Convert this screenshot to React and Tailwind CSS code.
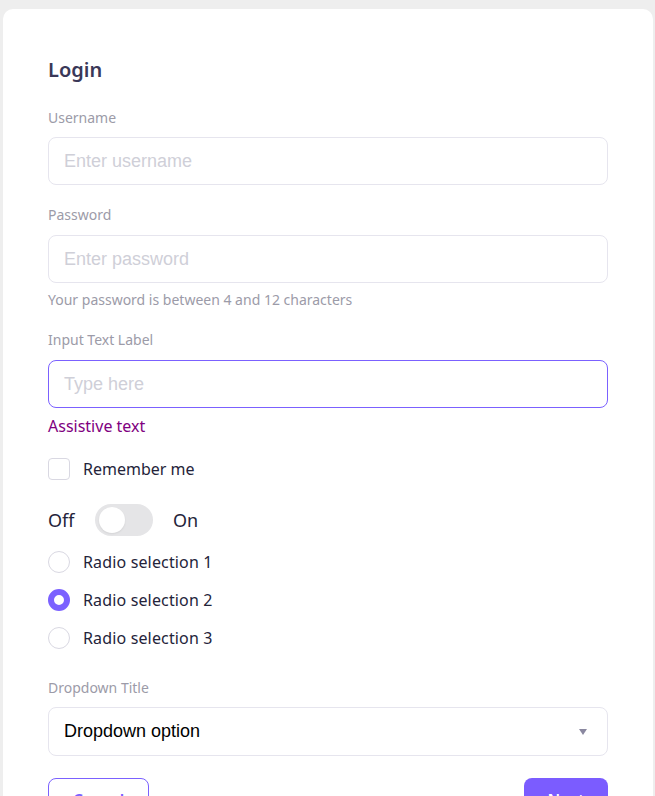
import React from "react";

export default function App() {
  const font = { fontFamily: '"Noto Sans", sans-serif' };
  return (
    <div className="min-h-[796px] bg-[#eeeeee] pt-[9px] pl-[3px] pr-[2px] overflow-hidden h-[796px]" style={font}>
      <div className="bg-white rounded-[10px] pt-[47px] px-[45px] pb-10 font-['Noto_Sans',sans-serif]">
        <h1 className="text-[20px] leading-[28px] font-semibold text-[#3a3858]">Login</h1>

        <label className="block mt-[24px] text-[14px] leading-[20px] text-[#9c9ba8]">Username</label>
        <div className="mt-[9px] h-[48px] border border-[#e6e5ee] rounded-[8px] flex items-center px-[15px]">
          <span className="font-['Liberation_Sans',Arial,sans-serif] text-[18px] text-[#cfcfd8]">Enter username</span>
        </div>

        <label className="block mt-[20px] text-[14px] leading-[20px] text-[#9c9ba8]">Password</label>
        <div className="mt-[10px] h-[48px] border border-[#e6e5ee] rounded-[8px] flex items-center px-[15px]">
          <span className="font-['Liberation_Sans',Arial,sans-serif] text-[18px] text-[#cfcfd8]">Enter password</span>
        </div>
        <p className="mt-[7px] text-[14px] leading-[20px] text-[#9c9ba8]">Your password is between 4 and 12 characters</p>

        <label className="block mt-[20px] text-[14px] leading-[20px] text-[#9c9ba8]">Input Text Label</label>
        <div className="mt-[10px] h-[48px] border border-[#7b61ff] rounded-[8px] flex items-center px-[15px]">
          <span className="font-['Liberation_Sans',Arial,sans-serif] text-[18px] text-[#cfcfd8]">Type here</span>
        </div>
        <p className="mt-[6px] text-[16px] leading-[24px] text-[#800080]">Assistive text</p>

        <div className="mt-[19px] flex items-center gap-[13px] h-[24px]">
          <span className="w-[22px] h-[22px] rounded-[4px] border border-[#d9d8e2] bg-white"></span>
          <span className="text-[16px] text-[#24243a]">Remember me</span>
        </div>

        <div className="mt-[23px] flex items-center h-[32px]">
          <span className="text-[18px] text-[#24243a] w-[47px]">Off</span>
          <span className="w-[58px] h-[32px] rounded-full bg-[#e5e5e7] flex items-center px-[4px]">
            <span className="w-[26px] h-[26px] rounded-full bg-white shadow-[0_1px_2px_rgba(0,0,0,0.08)]"></span>
          </span>
          <span className="text-[18px] text-[#24243a] ml-[20px]">On</span>
        </div>

        <div className="mt-[14px] flex flex-col gap-[14px]">
          {[1, 2, 3].map((n) => (
            <div key={n} className="flex items-center gap-[13px] h-[24px]">
              {n === 2 ? (
                <span className="w-[22px] h-[22px] rounded-full border-[6px] border-[#7b61ff] bg-white"></span>
              ) : (
                <span className="w-[22px] h-[22px] rounded-full border border-[#d9d8e2] bg-white"></span>
              )}
              <span className="text-[16px] tracking-[0.15px] text-[#24243a]">Radio selection {n}</span>
            </div>
          ))}
        </div>

        <label className="block mt-[28px] text-[14px] leading-[20px] text-[#9c9ba8]">Dropdown Title</label>
        <div className="mt-[9px] h-[49px] border border-[#e6e5ee] rounded-[8px] flex items-center justify-between pl-[15px] pr-[20px]">
          <span className="font-['Liberation_Sans',Arial,sans-serif] text-[18px] text-black">Dropdown option</span>
          <svg width="8" height="6" viewBox="0 0 8 6"><path d="M0 0h8L4 6z" fill="#8a88a0" /></svg>
        </div>

        <div className="mt-[22px] flex justify-between">
          <button className="w-[101px] h-[44px] rounded-[8px] border border-[#7b61ff] bg-white text-[#7b61ff] text-[16px] font-semibold">Cancel</button>
          <button className="w-[84px] h-[44px] rounded-[8px] bg-[#7b5cff] text-white text-[16px] font-semibold">Next</button>
        </div>
      </div>
    </div>
  );
}
